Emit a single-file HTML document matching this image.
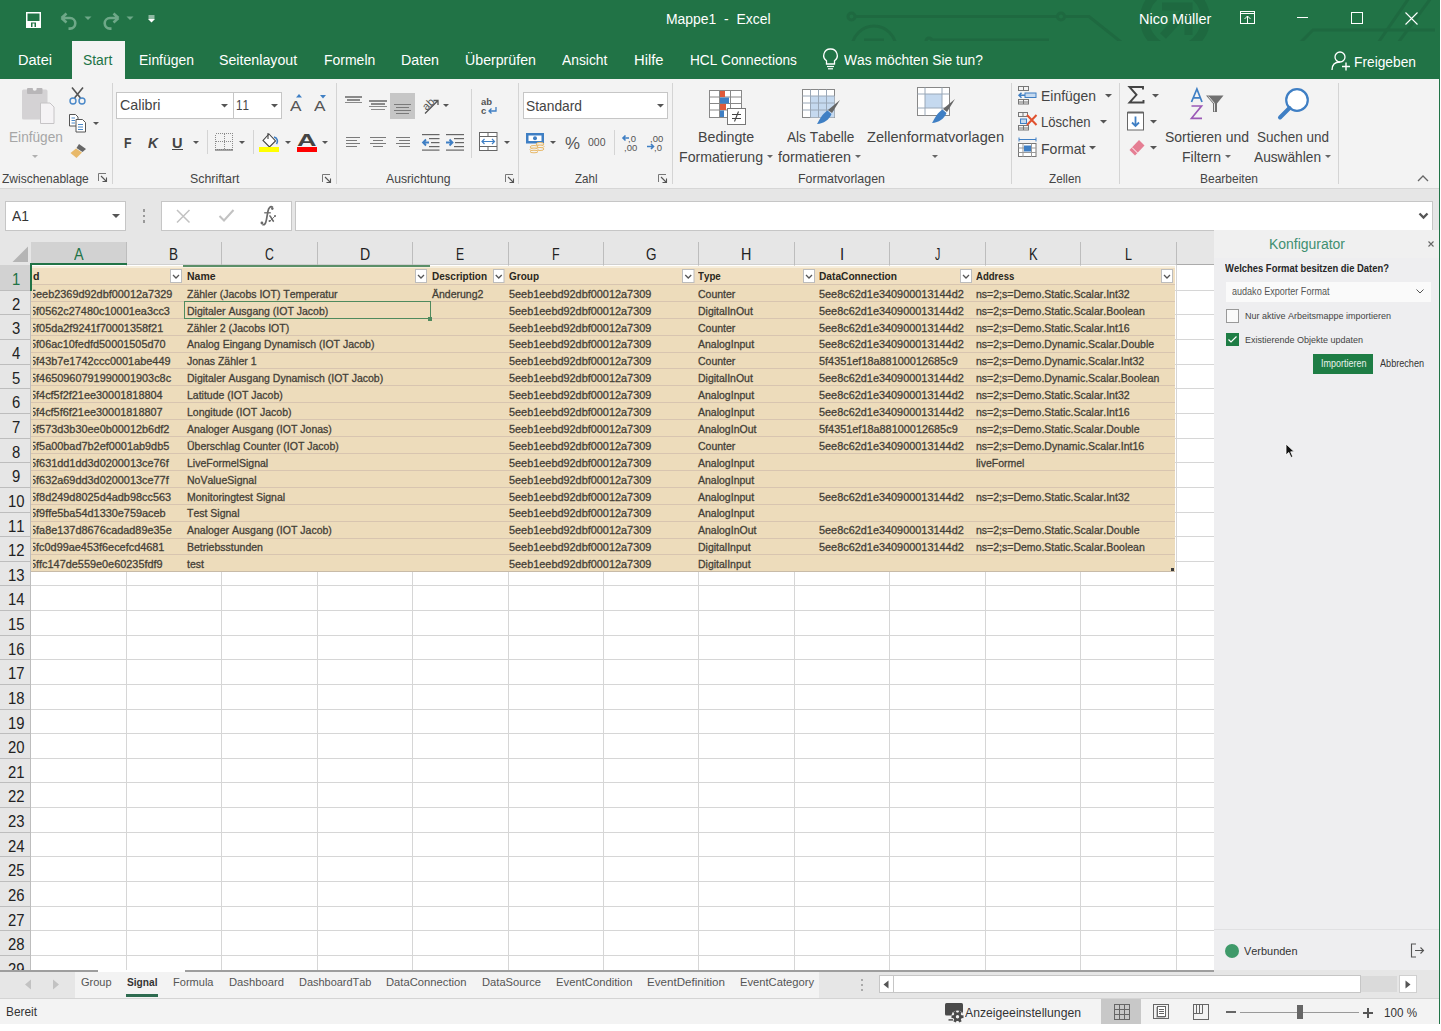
<!DOCTYPE html>
<html><head><meta charset="utf-8"><title>Excel</title>
<style>
html,body{margin:0;padding:0;background:#fff;}
#root{position:relative;width:1441px;height:1031px;overflow:hidden;font-family:"Liberation Sans",sans-serif;}
.t{position:absolute;white-space:pre;line-height:1;transform-origin:0 0;font-kerning:none;}
.r{position:absolute;}
svg.r{overflow:visible;}
</style></head><body><div id="root">
<div class="r" style="left:0px;top:0px;width:1441px;height:79px;background:#217346;"></div>
<svg class="r" style="left:0px;top:0px;overflow:hidden" width="1441" height="41" viewBox="0 0 1441 41"><g fill="none" stroke="#1e6940" stroke-width="3">
<circle cx="851.5" cy="16.5" r="3.5"/><line x1="855" y1="16.5" x2="1057.5" y2="16.5"/><circle cx="1061" cy="16.5" r="3.5"/>
<polyline points="1064.5,16.5 1089,16.5 1121,42"/>
<circle cx="874" cy="48" r="22"/><line x1="864" y1="40" x2="884" y2="40"/>
<circle cx="929" cy="41" r="3"/><line x1="932" y1="40" x2="1049" y2="40"/>
<circle cx="1175" cy="19" r="30.5" stroke-width="9"/>
<path d="M1163,36 L1188,9 M1162,6.5 H1188.5 V35" stroke-width="8"/>
<polyline points="1300,43 1313,30 1435,30"/>
<line x1="1378" y1="43" x2="1409" y2="-2"/><line x1="1398" y1="43" x2="1431" y2="-2"/>
</g></svg>
<svg class="r" style="left:26px;top:12px;" width="15" height="16" viewBox="0 0 15 16"><rect x="0.75" y="0.75" width="13.5" height="14.5" fill="none" stroke="#fff" stroke-width="1.5"/><rect x="1" y="9" width="13" height="6" fill="#fff"/><rect x="5" y="10.5" width="5" height="4.5" fill="#217346"/><rect x="6.5" y="11.5" width="2" height="3.5" fill="#fff"/></svg>
<svg class="r" style="left:59px;top:12px;" width="20" height="17" viewBox="0 0 20 17"><path d="M2.5,6 L7.5,1.5 M2.5,6 L7.5,10.5 M2.5,6 H11 A5.3,5.3 0 0 1 11,16.6 H9.5" fill="none" stroke="#6ea888" stroke-width="2.6"/></svg>
<svg class="r" style="left:84px;top:16px;" width="8" height="5" viewBox="0 0 8 5"><path d="M0.5,0.5 H7.5 L4,4 Z" fill="#6ea888"/></svg>
<svg class="r" style="left:101px;top:12px;" width="20" height="17" viewBox="0 0 20 17"><path d="M17.5,6 L12.5,1.5 M17.5,6 L12.5,10.5 M17.5,6 H9 A5.3,5.3 0 0 0 9,16.6 H10.5" fill="none" stroke="#6ea888" stroke-width="2.6"/></svg>
<svg class="r" style="left:126px;top:16px;" width="8" height="5" viewBox="0 0 8 5"><path d="M0.5,0.5 H7.5 L4,4 Z" fill="#6ea888"/></svg>
<svg class="r" style="left:148px;top:15px;" width="7" height="8" viewBox="0 0 7 8"><rect x="0.5" y="0.5" width="6" height="1" fill="#fff"/><rect x="0.5" y="2.5" width="6" height="1" fill="#fff"/><path d="M0,4 H7 L3.5,7.5 Z" fill="#fff"/></svg>
<div class="t" style="left:665.50px;top:11.48px;font-size:15.5px;color:#fff;transform:scaleX(0.8985);">Mappe1  -  Excel</div>
<div class="t" style="left:1138.60px;top:10.58px;font-size:15.5px;color:#fff;transform:scaleX(0.9340);">Nico Müller</div>
<svg class="r" style="left:1240px;top:11px;" width="16" height="14" viewBox="0 0 16 14"><rect x="0.5" y="0.5" width="14" height="12" fill="none" stroke="#fff" stroke-width="1"/><line x1="0.5" y1="2.5" x2="14.5" y2="2.5" stroke="#fff" stroke-width="1"/><path d="M7.5,12.5 V5 M4.5,8 L7.5,5 L10.5,8" fill="none" stroke="#fff" stroke-width="1"/></svg>
<div class="r" style="left:1297px;top:17px;width:11px;height:1px;background:#fff;"></div>
<div class="r" style="left:1351px;top:12px;width:12px;height:12px;background:transparent;border:1px solid #fff;box-sizing:border-box;"></div>
<svg class="r" style="left:1405px;top:12px;" width="13" height="13" viewBox="0 0 13 13"><path d="M0.5,0.5 L12.5,12.5 M12.5,0.5 L0.5,12.5" stroke="#fff" stroke-width="1.1"/></svg>
<div class="r" style="left:72px;top:41px;width:53px;height:38px;background:#f3f3f3;"></div>
<div class="t" style="left:17.50px;top:51.73px;font-size:15.2px;color:#fff;transform:scaleX(0.9582);">Datei</div>
<div class="t" style="left:138.50px;top:51.73px;font-size:15.2px;color:#fff;transform:scaleX(0.9166);">Einfügen</div>
<div class="t" style="left:219.30px;top:51.73px;font-size:15.2px;color:#fff;transform:scaleX(0.9347);">Seitenlayout</div>
<div class="t" style="left:323.50px;top:51.73px;font-size:15.2px;color:#fff;transform:scaleX(0.9203);">Formeln</div>
<div class="t" style="left:400.80px;top:51.73px;font-size:15.2px;color:#fff;transform:scaleX(0.9369);">Daten</div>
<div class="t" style="left:465.00px;top:51.73px;font-size:15.2px;color:#fff;transform:scaleX(0.9337);">Überprüfen</div>
<div class="t" style="left:562.30px;top:51.73px;font-size:15.2px;color:#fff;transform:scaleX(0.9108);">Ansicht</div>
<div class="t" style="left:634.20px;top:51.73px;font-size:15.2px;color:#fff;transform:scaleX(0.9734);">Hilfe</div>
<div class="t" style="left:690.00px;top:51.73px;font-size:15.2px;color:#fff;transform:scaleX(0.8982);">HCL Connections</div>
<div class="t" style="left:843.90px;top:51.73px;font-size:15.2px;color:#fff;transform:scaleX(0.9096);">Was möchten Sie tun?</div>
<div class="t" style="left:83.30px;top:51.73px;font-size:15.2px;color:#217346;transform:scaleX(0.9128);">Start</div>
<svg class="r" style="left:822px;top:48px;" width="17" height="22" viewBox="0 0 17 22"><path d="M8.5,1 A6.5,6.5 0 0 1 12.5,12.8 V16 H4.5 V12.8 A6.5,6.5 0 0 1 8.5,1 Z" fill="none" stroke="#fff" stroke-width="1.3"/><line x1="5" y1="18.5" x2="12" y2="18.5" stroke="#fff" stroke-width="1.2"/><line x1="6" y1="20.8" x2="11" y2="20.8" stroke="#fff" stroke-width="1.2"/></svg>
<svg class="r" style="left:1331px;top:51px;" width="20" height="20" viewBox="0 0 20 20"><circle cx="9" cy="6" r="5" fill="none" stroke="#fff" stroke-width="1.3"/><path d="M1,19 C1,13 4,11 9,11" fill="none" stroke="#fff" stroke-width="1.3"/><path d="M11,15.5 H19 M15,11.5 V19.5" stroke="#fff" stroke-width="1.4"/></svg>
<div class="t" style="left:1354.00px;top:53.83px;font-size:15.2px;color:#fff;transform:scaleX(0.9058);">Freigeben</div>
<div class="r" style="left:0px;top:79px;width:1439px;height:109px;background:#f3f3f3;"></div>
<div class="r" style="left:0px;top:188px;width:1439px;height:1px;background:#d6d6d6;"></div>
<div class="r" style="left:1439px;top:79px;width:1px;height:945px;background:#217346;"></div>
<div class="r" style="left:0px;top:189px;width:1439px;height:53px;background:#e6e6e6;"></div>
<div class="r" style="left:112px;top:83px;width:1px;height:101px;background:#d4d4d4;"></div>
<div class="r" style="left:336px;top:83px;width:1px;height:101px;background:#d4d4d4;"></div>
<div class="r" style="left:518px;top:83px;width:1px;height:101px;background:#d4d4d4;"></div>
<div class="r" style="left:672px;top:83px;width:1px;height:101px;background:#d4d4d4;"></div>
<div class="r" style="left:1011px;top:83px;width:1px;height:101px;background:#d4d4d4;"></div>
<div class="r" style="left:1119px;top:83px;width:1px;height:101px;background:#d4d4d4;"></div>
<div class="r" style="left:1338px;top:83px;width:1px;height:101px;background:#d4d4d4;"></div>
<div class="t" style="left:2.20px;top:172.96px;font-size:12.8px;color:#444444;transform:scaleX(0.9384);">Zwischenablage</div>
<div class="t" style="left:189.80px;top:172.96px;font-size:12.8px;color:#444444;transform:scaleX(0.9666);">Schriftart</div>
<div class="t" style="left:385.50px;top:172.96px;font-size:12.8px;color:#444444;transform:scaleX(0.9542);">Ausrichtung</div>
<div class="t" style="left:574.50px;top:172.96px;font-size:12.8px;color:#444444;transform:scaleX(0.9036);">Zahl</div>
<div class="t" style="left:798.00px;top:172.96px;font-size:12.8px;color:#444444;transform:scaleX(0.9706);">Formatvorlagen</div>
<div class="t" style="left:1049.00px;top:172.96px;font-size:12.8px;color:#444444;transform:scaleX(0.9179);">Zellen</div>
<div class="t" style="left:1200.00px;top:172.96px;font-size:12.8px;color:#444444;transform:scaleX(0.9368);">Bearbeiten</div>
<svg class="r" style="left:98px;top:173px;" width="10" height="10" viewBox="0 0 10 10"><path d="M0.5,8 V0.5 H8" fill="none" stroke="#777" stroke-width="1"/><path d="M3,3 L8.5,8.5 M8.5,4.5 V8.5 H4.5" fill="none" stroke="#555" stroke-width="1.1"/></svg>
<svg class="r" style="left:322px;top:174px;" width="10" height="10" viewBox="0 0 10 10"><path d="M0.5,8 V0.5 H8" fill="none" stroke="#777" stroke-width="1"/><path d="M3,3 L8.5,8.5 M8.5,4.5 V8.5 H4.5" fill="none" stroke="#555" stroke-width="1.1"/></svg>
<svg class="r" style="left:505px;top:174px;" width="10" height="10" viewBox="0 0 10 10"><path d="M0.5,8 V0.5 H8" fill="none" stroke="#777" stroke-width="1"/><path d="M3,3 L8.5,8.5 M8.5,4.5 V8.5 H4.5" fill="none" stroke="#555" stroke-width="1.1"/></svg>
<svg class="r" style="left:658px;top:174px;" width="10" height="10" viewBox="0 0 10 10"><path d="M0.5,8 V0.5 H8" fill="none" stroke="#777" stroke-width="1"/><path d="M3,3 L8.5,8.5 M8.5,4.5 V8.5 H4.5" fill="none" stroke="#555" stroke-width="1.1"/></svg>
<svg class="r" style="left:20px;top:86px;" width="36" height="40" viewBox="0 0 36 40"><rect x="2" y="3.5" width="25.5" height="30" rx="1.5" fill="#d4d2d4"/><rect x="7" y="2" width="15.5" height="6" rx="1" fill="#b8b6b8"/><circle cx="14.7" cy="2.8" r="2" fill="#f3f3f3"/><path d="M20.5,17 H30 L34,21 V37.5 H20.5 Z" fill="#f5f3f5" stroke="#c6c4c6" stroke-width="1"/></svg>
<div class="t" style="left:8.50px;top:128.80px;font-size:15px;color:#a6a6a6;transform:scaleX(0.9102);">Einfügen</div>
<svg class="r" style="left:32px;top:154.5px;" width="6" height="3" viewBox="0 0 6 3"><path d="M0,0 H6 L3,3 Z" fill="#b0b0b0"/></svg>
<svg class="r" style="left:69px;top:87px;" width="17" height="18" viewBox="0 0 17 18"><path d="M3,0.5 L11.5,11 M14,0.5 L5.5,11" stroke="#555" stroke-width="1.6"/><circle cx="4" cy="14" r="3" fill="none" stroke="#4a88c8" stroke-width="1.4"/><circle cx="13" cy="14" r="3" fill="none" stroke="#4a88c8" stroke-width="1.4"/></svg>
<svg class="r" style="left:69px;top:114px;" width="18" height="19" viewBox="0 0 18 19"><path d="M0.5,0.5 H6.5 L9,3 V12 H0.5 Z" fill="#fff" stroke="#555" stroke-width="1"/><path d="M7,5.5 H13.5 L16.5,8.5 V18 H7 Z" fill="#fff" stroke="#555" stroke-width="1"/><path d="M2.5,4 H6 M2.5,6.5 H6 M2.5,9 H6 M9,10.5 H14 M9,13 H14 M9,15.5 H14" stroke="#4a88c8" stroke-width="1"/></svg>
<svg class="r" style="left:93px;top:121.5px;" width="6" height="3" viewBox="0 0 6 3"><path d="M0,0 H6 L3,3 Z" fill="#555"/></svg>
<svg class="r" style="left:70px;top:143px;" width="17" height="15" viewBox="0 0 17 15"><path d="M9,1 L16,6 L12.5,9 L6.5,5 Z" fill="#666"/><path d="M6,5.5 L12,9.5 L6.5,15 L0.5,10 Z" fill="#e8b96a"/></svg>
<div class="r" style="left:116px;top:92px;width:118px;height:27px;background:#fff;border:1px solid #c6c6c6;box-sizing:border-box;"></div>
<div class="r" style="left:233px;top:92px;width:49px;height:27px;background:#fff;border:1px solid #c6c6c6;box-sizing:border-box;"></div>
<div class="t" style="left:119.50px;top:98.32px;font-size:14.5px;color:#444444;transform:scaleX(0.9856);">Calibri</div>
<div class="t" style="left:236.00px;top:98.32px;font-size:14.5px;color:#444444;transform:scaleX(0.8060);">11</div>
<svg class="r" style="left:221.0px;top:103.75px;" width="7.0" height="3.5" viewBox="0 0 7.0 3.5"><path d="M0,0 H7.0 L3.5,3.5 Z" fill="#555"/></svg>
<svg class="r" style="left:271.0px;top:103.75px;" width="7.0" height="3.5" viewBox="0 0 7.0 3.5"><path d="M0,0 H7.0 L3.5,3.5 Z" fill="#555"/></svg>
<div class="t" style="left:290.40px;top:98.30px;font-size:15px;color:#555;transform:scaleX(1.1494);">A</div>
<svg class="r" style="left:296px;top:94px;" width="7" height="4" viewBox="0 0 7 4"><path d="M0,3.5 H6 L3,0 Z" fill="#3f7fc4"/></svg>
<div class="t" style="left:313.50px;top:98.30px;font-size:15px;color:#555;transform:scaleX(1.1494);">A</div>
<svg class="r" style="left:320px;top:95px;" width="7" height="4" viewBox="0 0 7 4"><path d="M0,0 H6 L3,3.5 Z" fill="#3f7fc4"/></svg>
<div class="t" style="left:124.40px;top:134.68px;font-size:15.5px;color:#444;font-weight:bold;transform:scaleX(0.7921);">F</div>
<div class="t" style="left:148.00px;top:134.68px;font-size:15.5px;color:#444;font-weight:bold;transform:scaleX(0.8934);font-style:italic;">K</div>
<div class="t" style="left:172.00px;top:134.68px;font-size:15.5px;color:#444;font-weight:bold;transform:scaleX(0.9380);">U</div>
<div class="r" style="left:172px;top:148.6px;width:11px;height:1.4px;background:#444;"></div>
<svg class="r" style="left:193px;top:140.5px;" width="6" height="3" viewBox="0 0 6 3"><path d="M0,0 H6 L3,3 Z" fill="#555"/></svg>
<div class="r" style="left:207px;top:130px;width:1px;height:24px;background:#d4d4d4;"></div>
<svg class="r" style="left:215px;top:133px;" width="18" height="18" viewBox="0 0 18 18"><g stroke="#8a8a8a" stroke-width="1" stroke-dasharray="1,1" fill="none" shape-rendering="crispEdges"><rect x="0.5" y="0.5" width="17" height="16"/><line x1="9.5" y1="0.5" x2="9.5" y2="16.5"/><line x1="0.5" y1="8.5" x2="17.5" y2="8.5"/></g><line x1="0" y1="17" x2="18" y2="17" stroke="#777" stroke-width="1.3"/></svg>
<svg class="r" style="left:239px;top:140.5px;" width="6" height="3" viewBox="0 0 6 3"><path d="M0,0 H6 L3,3 Z" fill="#555"/></svg>
<div class="r" style="left:253px;top:130px;width:1px;height:24px;background:#d4d4d4;"></div>
<svg class="r" style="left:259px;top:132px;" width="22" height="21" viewBox="0 0 22 21"><path d="M10,2 L16.5,9 L10.5,15 L4,8.5 Z" fill="#fff" stroke="#444" stroke-width="1.1"/><path d="M9,1 V7" stroke="#444" stroke-width="1.1"/><path d="M15,5 C19,6 19,10 17.5,12" fill="none" stroke="#3f7fc4" stroke-width="1.6"/><rect x="0" y="15" width="20" height="5" fill="#ffff00"/></svg>
<svg class="r" style="left:285px;top:140.5px;" width="6" height="3" viewBox="0 0 6 3"><path d="M0,0 H6 L3,3 Z" fill="#555"/></svg>
<div class="t" style="left:297.00px;top:132.03px;font-size:16.5px;color:#444;font-weight:bold;transform:scaleX(1.6365);">A</div>
<div class="r" style="left:297px;top:147px;width:20px;height:5px;background:#ff0000;"></div>
<svg class="r" style="left:322px;top:140.5px;" width="6" height="3" viewBox="0 0 6 3"><path d="M0,0 H6 L3,3 Z" fill="#555"/></svg>
<div class="r" style="left:344.5px;top:96.3px;width:17.5px;height:1.4px;background:#8a8a8a;"></div>
<div class="r" style="left:346.5px;top:99.2px;width:13.5px;height:1.4px;background:#8a8a8a;"></div>
<div class="r" style="left:344.5px;top:102.1px;width:17.5px;height:1.4px;background:#8a8a8a;"></div>
<div class="r" style="left:369px;top:100.3px;width:17.5px;height:1.4px;background:#8a8a8a;"></div>
<div class="r" style="left:371px;top:103.2px;width:13.5px;height:1.4px;background:#8a8a8a;"></div>
<div class="r" style="left:369px;top:106.1px;width:17.5px;height:1.4px;background:#8a8a8a;"></div>
<div class="r" style="left:371px;top:109px;width:13.5px;height:1.4px;background:#8a8a8a;"></div>
<div class="r" style="left:390px;top:93px;width:25px;height:26px;background:#c6c6c6;"></div>
<div class="r" style="left:394px;top:104.1px;width:17px;height:1.4px;background:#7a7a7a;"></div>
<div class="r" style="left:396px;top:107px;width:13px;height:1.4px;background:#7a7a7a;"></div>
<div class="r" style="left:394px;top:110px;width:17px;height:1.4px;background:#7a7a7a;"></div>
<div class="r" style="left:396px;top:112.9px;width:13px;height:1.4px;background:#7a7a7a;"></div>
<svg class="r" style="left:421px;top:96px;" width="20" height="19" viewBox="0 0 20 19"><text x="1" y="12" font-family="Liberation Sans" font-size="11" fill="#555" transform="rotate(-45 7 8)">ab</text><path d="M4,17.5 L17,4.5 M12.5,4.5 H17 V9" fill="none" stroke="#555" stroke-width="1.3"/></svg>
<svg class="r" style="left:443px;top:103.5px;" width="6" height="3" viewBox="0 0 6 3"><path d="M0,0 H6 L3,3 Z" fill="#555"/></svg>
<div class="r" style="left:471px;top:89px;width:1px;height:69px;background:#d4d4d4;"></div>
<svg class="r" style="left:480px;top:97px;" width="18" height="18" viewBox="0 0 18 18"><text x="1" y="8" font-family="Liberation Sans" font-weight="bold" font-size="9.5" fill="#555">ab</text><text x="1" y="16.5" font-family="Liberation Sans" font-weight="bold" font-size="9.5" fill="#555">c</text><path d="M16,10 V14 H9 M11.5,11.5 L9,14 L11.5,16.5" fill="none" stroke="#3f7fc4" stroke-width="1.3"/></svg>
<div class="r" style="left:346px;top:137px;width:14px;height:1.2px;background:#7a7a7a;"></div>
<div class="r" style="left:370px;top:137px;width:15.5px;height:1.2px;background:#7a7a7a;"></div>
<div class="r" style="left:396px;top:137px;width:13.5px;height:1.2px;background:#7a7a7a;"></div>
<div class="r" style="left:346px;top:140px;width:11px;height:1.2px;background:#7a7a7a;"></div>
<div class="r" style="left:373px;top:140px;width:9.5px;height:1.2px;background:#7a7a7a;"></div>
<div class="r" style="left:399px;top:140px;width:10.5px;height:1.2px;background:#7a7a7a;"></div>
<div class="r" style="left:346px;top:143px;width:14px;height:1.2px;background:#7a7a7a;"></div>
<div class="r" style="left:370px;top:143px;width:15.5px;height:1.2px;background:#7a7a7a;"></div>
<div class="r" style="left:396px;top:143px;width:13.5px;height:1.2px;background:#7a7a7a;"></div>
<div class="r" style="left:346px;top:146px;width:11px;height:1.2px;background:#7a7a7a;"></div>
<div class="r" style="left:373px;top:146px;width:9.5px;height:1.2px;background:#7a7a7a;"></div>
<div class="r" style="left:399px;top:146px;width:10.5px;height:1.2px;background:#7a7a7a;"></div>
<svg class="r" style="left:422px;top:134px;" width="18" height="17" viewBox="0 0 18 17"><rect x="0" y="0" width="17.5" height="1.2" fill="#666"/><rect x="7" y="4" width="10.5" height="1.2" fill="#666"/><rect x="9" y="8" width="8.5" height="1.2" fill="#666"/><rect x="7" y="12" width="10.5" height="1.2" fill="#666"/><rect x="0" y="15.5" width="17.5" height="1.2" fill="#666"/><path d="M1,8.5 H7 M4,5.5 L1,8.5 L4,11.5" fill="none" stroke="#3f7fc4" stroke-width="1.8"/></svg>
<svg class="r" style="left:446px;top:134px;" width="19" height="17" viewBox="0 0 19 17"><rect x="0" y="0" width="18" height="1.2" fill="#666"/><rect x="8" y="4" width="10" height="1.2" fill="#666"/><rect x="9" y="8" width="9" height="1.2" fill="#666"/><rect x="8" y="12" width="10" height="1.2" fill="#666"/><rect x="0" y="15.5" width="18" height="1.2" fill="#666"/><path d="M0,8.5 H6.5 M3.5,5.5 L6.5,8.5 L3.5,11.5" fill="none" stroke="#3f7fc4" stroke-width="1.8"/></svg>
<svg class="r" style="left:479px;top:132px;" width="19" height="20" viewBox="0 0 19 20"><rect x="0.5" y="0.5" width="17.5" height="18" fill="#fff" stroke="#666" stroke-width="1"/><path d="M0.5,4.5 H18 M0.5,14.5 H18 M9,0.5 V4.5 M9,14.5 V18.5" stroke="#666" stroke-width="1"/><path d="M3,9.5 H15.5 M5.5,7 L3,9.5 L5.5,12 M13,7 L15.5,9.5 L13,12" fill="none" stroke="#3f7fc4" stroke-width="1.2"/></svg>
<svg class="r" style="left:503.5px;top:140.5px;" width="6" height="3" viewBox="0 0 6 3"><path d="M0,0 H6 L3,3 Z" fill="#555"/></svg>
<div class="r" style="left:523px;top:92px;width:145px;height:27px;background:#fff;border:1px solid #c6c6c6;box-sizing:border-box;"></div>
<div class="t" style="left:526.00px;top:98.72px;font-size:14.5px;color:#444444;transform:scaleX(0.9516);">Standard</div>
<svg class="r" style="left:656.5px;top:103.75px;" width="7.0" height="3.5" viewBox="0 0 7.0 3.5"><path d="M0,0 H7.0 L3.5,3.5 Z" fill="#555"/></svg>
<svg class="r" style="left:526px;top:133px;" width="19" height="20" viewBox="0 0 19 20"><rect x="0" y="0" width="18" height="10.5" fill="#3f7fc4"/><rect x="2.5" y="2.5" width="13" height="5.5" fill="#fff"/><circle cx="9" cy="5.2" r="2" fill="#3f7fc4"/><g fill="#f3f3f3" stroke="#e8b96a" stroke-width="1"><ellipse cx="14" cy="11" rx="4" ry="1.5"/><ellipse cx="14" cy="13.5" rx="4" ry="1.5"/><ellipse cx="14" cy="16" rx="4" ry="1.5"/><ellipse cx="8" cy="14" rx="4" ry="1.5"/><ellipse cx="8" cy="16.5" rx="4" ry="1.5"/><ellipse cx="8" cy="18.5" rx="4" ry="1.3"/></g></svg>
<svg class="r" style="left:550px;top:140.5px;" width="6" height="3" viewBox="0 0 6 3"><path d="M0,0 H6 L3,3 Z" fill="#555"/></svg>
<div class="t" style="left:565.00px;top:135.11px;font-size:17px;color:#555;transform:scaleX(0.9923);">%</div>
<div class="t" style="left:588.00px;top:137.19px;font-size:11px;color:#555;transform:scaleX(0.9535);">000</div>
<div class="r" style="left:614px;top:130px;width:1px;height:25px;background:#d4d4d4;"></div>
<svg class="r" style="left:622px;top:133px;" width="18" height="19" viewBox="0 0 18 19"><text x="6" y="8.5" font-family="Liberation Sans" font-size="9.5" fill="#555">,0</text><text x="2" y="17.5" font-family="Liberation Sans" font-size="9.5" fill="#555">,00</text><path d="M1,5 H7 M3.5,2.5 L1,5 L3.5,7.5" fill="none" stroke="#3f7fc4" stroke-width="1.6"/></svg>
<svg class="r" style="left:646px;top:133px;" width="19" height="19" viewBox="0 0 19 19"><text x="4" y="8.5" font-family="Liberation Sans" font-size="9.5" fill="#555">,00</text><text x="8" y="17.5" font-family="Liberation Sans" font-size="9.5" fill="#555">,0</text><path d="M1,13.5 H7.5 M5,11 L7.5,13.5 L5,16" fill="none" stroke="#3f7fc4" stroke-width="1.6"/></svg>
<svg class="r" style="left:709px;top:90px;" width="38" height="35" viewBox="0 0 38 35"><g fill="#fff" stroke="#888" stroke-width="1"><rect x="0.5" y="0.5" width="32" height="27"/></g><path d="M0.5,7 H32.5 M0.5,13.5 H32.5 M0.5,20 H32.5 M10.5,0.5 V27.5 M21.5,0.5 V27.5" stroke="#888" stroke-width="1"/><rect x="11" y="1" width="5" height="6" fill="#e05a3a"/><rect x="11" y="7.5" width="9" height="6" fill="#3f7fc4"/><rect x="11" y="14" width="6" height="6" fill="#e05a3a"/><rect x="11" y="20.5" width="4" height="6.5" fill="#3f7fc4"/><rect x="18.5" y="18.5" width="18" height="16" fill="#fff" stroke="#777" stroke-width="1"/><path d="M23,24.5 H32 M23,28.5 H32 M29.5,21.5 L25.5,31.5" stroke="#444" stroke-width="1.1"/></svg>
<div class="t" style="left:698.20px;top:129.00px;font-size:15px;color:#444444;transform:scaleX(0.9491);">Bedingte</div>
<div class="t" style="left:678.80px;top:148.80px;font-size:15px;color:#444444;transform:scaleX(0.9417);">Formatierung</div>
<svg class="r" style="left:767px;top:155.0px;" width="6" height="3" viewBox="0 0 6 3"><path d="M0,0 H6 L3,3 Z" fill="#666"/></svg>
<svg class="r" style="left:802px;top:89px;" width="40" height="36" viewBox="0 0 40 36"><rect x="0.5" y="0.5" width="32" height="28" fill="#fff" stroke="#888"/><rect x="8.5" y="7" width="24" height="21.5" fill="#c5d9ef"/><path d="M0.5,7 H32.5 M0.5,14 H32.5 M0.5,21 H32.5 M8.5,0.5 V28.5 M16.5,0.5 V28.5 M24.5,0.5 V28.5" stroke="#9aa8b8" stroke-width="1"/><path d="M38,11 L30,24 L26,21 Z" fill="#666"/><path d="M25.5,21.5 L29.5,25 C27,31 22,34.5 15,35 C18,30 20,25 25.5,21.5 Z" fill="#3f7fc4"/></svg>
<div class="t" style="left:786.60px;top:129.00px;font-size:15px;color:#444444;transform:scaleX(0.9083);">Als Tabelle</div>
<div class="t" style="left:778.00px;top:148.80px;font-size:15px;color:#444444;transform:scaleX(0.9622);">formatieren</div>
<svg class="r" style="left:855px;top:155.0px;" width="6" height="3" viewBox="0 0 6 3"><path d="M0,0 H6 L3,3 Z" fill="#666"/></svg>
<svg class="r" style="left:917px;top:87px;" width="40" height="38" viewBox="0 0 40 38"><rect x="0.5" y="0.5" width="32" height="28" fill="#fff" stroke="#888"/><rect x="8" y="7" width="17" height="14" fill="#c5d9ef"/><path d="M0.5,7 H32.5 M0.5,21 H32.5 M8,0.5 V28.5 M25,0.5 V28.5" stroke="#9aa8b8" stroke-width="1"/><path d="M38,12 L30,25 L26,22 Z" fill="#666"/><path d="M25.5,22.5 L29.5,26 C27,32 22,35.5 15,36 C18,31 20,26 25.5,22.5 Z" fill="#3f7fc4"/></svg>
<div class="t" style="left:866.50px;top:129.00px;font-size:15px;color:#444444;transform:scaleX(0.9723);">Zellenformatvorlagen</div>
<svg class="r" style="left:932px;top:155.0px;" width="6" height="3" viewBox="0 0 6 3"><path d="M0,0 H6 L3,3 Z" fill="#666"/></svg>
<svg class="r" style="left:1018px;top:86px;" width="19" height="19" viewBox="0 0 19 19"><g fill="none" stroke="#777" stroke-width="1"><rect x="0.5" y="0.5" width="10" height="4"/><rect x="0.5" y="13.5" width="10" height="4.5"/><path d="M0.5,16 H10.5 M5.5,13.5 V18"/><path d="M5.5,0.5 V4.5"/></g><rect x="7" y="7" width="11" height="4.5" fill="#c5d9ef" stroke="#3f7fc4" stroke-width="1"/><path d="M1,9.2 H7 M3.5,6.7 L1,9.2 L3.5,11.7" fill="none" stroke="#3f7fc4" stroke-width="1.5"/></svg>
<div class="t" style="left:1040.50px;top:87.90px;font-size:15px;color:#444444;transform:scaleX(0.9288);">Einfügen</div>
<svg class="r" style="left:1104.5px;top:93.75px;" width="7.0" height="3.5" viewBox="0 0 7.0 3.5"><path d="M0,0 H7.0 L3.5,3.5 Z" fill="#555"/></svg>
<svg class="r" style="left:1018px;top:112px;" width="20" height="19" viewBox="0 0 20 19"><g fill="none" stroke="#777" stroke-width="1"><rect x="0.5" y="0.5" width="9" height="4"/><rect x="0.5" y="13.5" width="10" height="4.5"/><path d="M0.5,16 H10.5 M5.5,13.5 V18 M5,0.5 V4.5"/></g><rect x="2.5" y="7" width="6" height="4.5" fill="#c5d9ef" stroke="#3f7fc4"/><path d="M9,3 L18.5,13 M18.5,3 L9,13" stroke="#e0512e" stroke-width="2"/></svg>
<div class="t" style="left:1040.50px;top:114.30px;font-size:15px;color:#444444;transform:scaleX(0.8728);">Löschen</div>
<svg class="r" style="left:1099.5px;top:119.75px;" width="7.0" height="3.5" viewBox="0 0 7.0 3.5"><path d="M0,0 H7.0 L3.5,3.5 Z" fill="#555"/></svg>
<svg class="r" style="left:1018px;top:137px;" width="20" height="22" viewBox="0 0 20 22"><path d="M1,2.5 H18 M1,0.5 V4.5 M18,0.5 V4.5" stroke="#3f7fc4" stroke-width="1"/><rect x="0.5" y="6.5" width="17.5" height="13" fill="#fff" stroke="#777"/><path d="M0.5,11 H18 M0.5,15.5 H18 M5,6.5 V20 M13.5,6.5 V20" stroke="#999" stroke-width="1"/><rect x="6" y="8.5" width="7" height="6" fill="#3f7fc4"/></svg>
<div class="t" style="left:1040.50px;top:140.90px;font-size:15px;color:#444444;transform:scaleX(0.9367);">Format</div>
<svg class="r" style="left:1088.5px;top:146.25px;" width="7.0" height="3.5" viewBox="0 0 7.0 3.5"><path d="M0,0 H7.0 L3.5,3.5 Z" fill="#555"/></svg>
<svg class="r" style="left:1128px;top:86px;" width="17" height="18" viewBox="0 0 17 18"><path d="M15,3.5 V1 H1.5 L8.5,8.8 L1.5,16.5 H15.5 V14" fill="none" stroke="#444" stroke-width="1.9" stroke-linejoin="miter"/></svg>
<svg class="r" style="left:1151.5px;top:93.75px;" width="7.0" height="3.5" viewBox="0 0 7.0 3.5"><path d="M0,0 H7.0 L3.5,3.5 Z" fill="#555"/></svg>
<svg class="r" style="left:1127px;top:111px;" width="18" height="20" viewBox="0 0 18 20"><rect x="0.5" y="1.5" width="16" height="17.5" fill="#fff" stroke="#666"/><rect x="0.5" y="0.5" width="16" height="2" fill="#666"/><path d="M8.5,5.5 V15 M5,11.5 L8.5,15 L12,11.5" fill="none" stroke="#3f7fc4" stroke-width="1.8"/></svg>
<svg class="r" style="left:1149.5px;top:119.75px;" width="7.0" height="3.5" viewBox="0 0 7.0 3.5"><path d="M0,0 H7.0 L3.5,3.5 Z" fill="#555"/></svg>
<svg class="r" style="left:1128px;top:139px;" width="18" height="18" viewBox="0 0 18 18"><path d="M11,1 L16.5,6.5 L7,16.5 L1.5,11 Z" fill="#e57e93"/><path d="M4,8.5 L9.5,14" stroke="#fff" stroke-width="1"/></svg>
<svg class="r" style="left:1149.5px;top:146.25px;" width="7.0" height="3.5" viewBox="0 0 7.0 3.5"><path d="M0,0 H7.0 L3.5,3.5 Z" fill="#555"/></svg>
<svg class="r" style="left:1189px;top:88px;" width="36" height="33" viewBox="0 0 36 33"><path d="M2.5,14 L7.9,1 L13,14 M4.3,9.8 H11.5" fill="none" stroke="#3f7fc4" stroke-width="1.7"/><path d="M2.5,18 H12.5 L2.5,30.3 H13" fill="none" stroke="#9b59b6" stroke-width="1.7"/><path d="M17,7.5 H34.5 L28,15.5 V24 H24 V15.5 Z" fill="#707070"/><path d="M19.5,8.5 L25.5,15.5 V23.5" fill="none" stroke="#f3f3f3" stroke-width="0.9"/></svg>
<div class="t" style="left:1164.50px;top:129.00px;font-size:15px;color:#444444;transform:scaleX(0.9327);">Sortieren und</div>
<div class="t" style="left:1182.00px;top:148.80px;font-size:15px;color:#444444;transform:scaleX(0.9358);">Filtern</div>
<svg class="r" style="left:1225px;top:155.0px;" width="6" height="3" viewBox="0 0 6 3"><path d="M0,0 H6 L3,3 Z" fill="#666"/></svg>
<svg class="r" style="left:1276px;top:87px;" width="35" height="35" viewBox="0 0 35 35"><circle cx="21" cy="13" r="10.8" fill="#fff" stroke="#3f7fc4" stroke-width="2.2"/><path d="M13.5,21 L4,30.5" stroke="#3f7fc4" stroke-width="4" stroke-linecap="round"/></svg>
<div class="t" style="left:1257.00px;top:129.00px;font-size:15px;color:#444444;transform:scaleX(0.8992);">Suchen und</div>
<div class="t" style="left:1254.40px;top:148.80px;font-size:15px;color:#444444;transform:scaleX(0.9130);">Auswählen</div>
<svg class="r" style="left:1325px;top:155.0px;" width="6" height="3" viewBox="0 0 6 3"><path d="M0,0 H6 L3,3 Z" fill="#666"/></svg>
<svg class="r" style="left:1417px;top:174px;" width="12" height="8" viewBox="0 0 12 8"><path d="M1,7 L6,2 L11,7" fill="none" stroke="#666" stroke-width="1.3"/></svg>
<div class="r" style="left:5px;top:201px;width:121px;height:30px;background:#fff;border:1px solid #c6c6c6;box-sizing:border-box;"></div>
<div class="t" style="left:12.00px;top:209.01px;font-size:14.4px;color:#333;transform:scaleX(0.9652);">A1</div>
<svg class="r" style="left:112px;top:213.5px;" width="8" height="4" viewBox="0 0 8 4"><path d="M0,0 H8 L4,4 Z" fill="#555"/></svg>
<div class="r" style="left:142.5px;top:209px;width:2.5px;height:2.5px;background:#999;"></div>
<div class="r" style="left:142.5px;top:214.5px;width:2.5px;height:2.5px;background:#999;"></div>
<div class="r" style="left:142.5px;top:220px;width:2.5px;height:2.5px;background:#999;"></div>
<div class="r" style="left:161px;top:201px;width:131px;height:30px;background:#fff;border:1px solid #c6c6c6;box-sizing:border-box;"></div>
<svg class="r" style="left:176px;top:209px;" width="15" height="15" viewBox="0 0 15 15"><path d="M1,1 L13.5,13.5 M13.5,1 L1,13.5" stroke="#c2c2c2" stroke-width="1.5"/></svg>
<svg class="r" style="left:218px;top:208px;" width="17" height="15" viewBox="0 0 17 15"><path d="M1.5,8 L6,12.5 L15.5,2" fill="none" stroke="#c2c2c2" stroke-width="2"/></svg>
<svg class="r" style="left:250px;top:202px;" width="40" height="28" viewBox="0 0 40 28"><g fill="none" stroke="#6a6a6a"><path d="M22.8,5.4 C20.5,3.6 18.6,5.5 17.9,9.5 L16.4,17.8 C15.7,21.6 14.6,23.2 12.4,22.6" stroke-width="1.7"/><path d="M14.2,10.8 H20.8" stroke-width="1.3"/><path d="M19.4,13.4 C21.2,14.2 22,18.2 23.8,19.7" stroke-width="1.6"/><path d="M25.3,13.8 L19.6,19.4" stroke-width="0.9"/></g><g fill="#6a6a6a"><circle cx="22.3" cy="6.6" r="1.3"/><circle cx="11.9" cy="21" r="1.4"/><circle cx="25" cy="13.9" r="1"/><circle cx="19.6" cy="19" r="1.1"/></g></svg>
<div class="r" style="left:295px;top:201px;width:1138px;height:30px;background:#fff;border:1px solid #c6c6c6;box-sizing:border-box;"></div>
<svg class="r" style="left:1418px;top:212px;" width="11" height="7" viewBox="0 0 11 7"><path d="M1.5,1.5 L5.5,5.5 L9.5,1.5" fill="none" stroke="#555" stroke-width="2.3"/></svg>
<div class="r" style="left:31px;top:265px;width:1183px;height:706px;background:#fff;"></div>
<div class="r" style="left:0px;top:242px;width:1214px;height:23px;background:#e6e6e6;"></div>
<div class="r" style="left:0px;top:265px;width:30px;height:706px;background:#e6e6e6;"></div>
<div class="r" style="left:31px;top:242px;width:95px;height:22px;background:#d2d2d2;"></div>
<div class="r" style="left:31px;top:263px;width:95px;height:2px;background:#217346;"></div>
<div class="r" style="left:127px;top:264px;width:1087px;height:1px;background:#d0d0d0;"></div>
<div class="r" style="left:1176px;top:264px;width:38px;height:1.3px;background:#ababab;"></div>
<div class="r" style="left:126px;top:242px;width:1px;height:23px;background:#bdbdbd;"></div>
<div class="t" style="left:74.19px;top:246.40px;font-size:16.3px;color:#217346;transform:scaleX(0.8854);">A</div>
<div class="r" style="left:221px;top:242px;width:1px;height:23px;background:#bdbdbd;"></div>
<div class="t" style="left:169.48px;top:246.40px;font-size:16.3px;color:#222;transform:scaleX(0.8319);">B</div>
<div class="r" style="left:317px;top:242px;width:1px;height:23px;background:#bdbdbd;"></div>
<div class="t" style="left:265.07px;top:246.40px;font-size:16.3px;color:#222;transform:scaleX(0.7528);">C</div>
<div class="r" style="left:412px;top:242px;width:1px;height:23px;background:#bdbdbd;"></div>
<div class="t" style="left:359.89px;top:246.40px;font-size:16.3px;color:#222;transform:scaleX(0.8686);">D</div>
<div class="r" style="left:508px;top:242px;width:1px;height:23px;background:#bdbdbd;"></div>
<div class="t" style="left:456.44px;top:246.40px;font-size:16.3px;color:#222;transform:scaleX(0.7463);">E</div>
<div class="r" style="left:603px;top:242px;width:1px;height:23px;background:#bdbdbd;"></div>
<div class="t" style="left:552.18px;top:246.40px;font-size:16.3px;color:#222;transform:scaleX(0.7665);">F</div>
<div class="r" style="left:698px;top:242px;width:1px;height:23px;background:#bdbdbd;"></div>
<div class="t" style="left:645.75px;top:246.40px;font-size:16.3px;color:#222;transform:scaleX(0.8275);">G</div>
<div class="r" style="left:794px;top:242px;width:1px;height:23px;background:#bdbdbd;"></div>
<div class="t" style="left:741.32px;top:246.40px;font-size:16.3px;color:#222;transform:scaleX(0.8799);">H</div>
<div class="r" style="left:889px;top:242px;width:1px;height:23px;background:#bdbdbd;"></div>
<div class="t" style="left:839.91px;top:246.40px;font-size:16.3px;color:#222;transform:scaleX(0.9252);">I</div>
<div class="r" style="left:985px;top:242px;width:1px;height:23px;background:#bdbdbd;"></div>
<div class="t" style="left:934.85px;top:246.40px;font-size:16.3px;color:#222;transform:scaleX(0.6508);">J</div>
<div class="r" style="left:1080px;top:242px;width:1px;height:23px;background:#bdbdbd;"></div>
<div class="t" style="left:1028.68px;top:246.40px;font-size:16.3px;color:#222;transform:scaleX(0.7952);">K</div>
<div class="r" style="left:1176px;top:242px;width:1px;height:23px;background:#bdbdbd;"></div>
<div class="t" style="left:1125.01px;top:246.40px;font-size:16.3px;color:#222;transform:scaleX(0.7703);">L</div>
<svg class="r" style="left:12px;top:246px;" width="17" height="17" viewBox="0 0 17 17"><path d="M16,0.5 V16 H0.5 Z" fill="#b5b5b5"/></svg>
<div class="r" style="left:30px;top:265px;width:1px;height:706px;background:#bdbdbd;"></div>
<div class="r" style="left:0px;top:265px;width:30px;height:25px;background:#d2d2d2;"></div>
<div class="t" style="left:11.87px;top:271.00px;font-size:16.3px;color:#217346;transform:scaleX(0.9116);">1</div>
<div class="r" style="left:0px;top:290px;width:30px;height:1px;background:#bdbdbd;"></div>
<div class="r" style="left:31px;top:290px;width:1183px;height:1px;background:#d6d6d6;"></div>
<div class="t" style="left:11.87px;top:295.50px;font-size:16.3px;color:#222;transform:scaleX(0.9116);">2</div>
<div class="r" style="left:0px;top:314px;width:30px;height:1px;background:#bdbdbd;"></div>
<div class="r" style="left:31px;top:314px;width:1183px;height:1px;background:#d6d6d6;"></div>
<div class="t" style="left:11.87px;top:320.00px;font-size:16.3px;color:#222;transform:scaleX(0.9116);">3</div>
<div class="r" style="left:0px;top:339px;width:30px;height:1px;background:#bdbdbd;"></div>
<div class="r" style="left:31px;top:339px;width:1183px;height:1px;background:#d6d6d6;"></div>
<div class="t" style="left:11.87px;top:345.00px;font-size:16.3px;color:#222;transform:scaleX(0.9116);">4</div>
<div class="r" style="left:0px;top:364px;width:30px;height:1px;background:#bdbdbd;"></div>
<div class="r" style="left:31px;top:364px;width:1183px;height:1px;background:#d6d6d6;"></div>
<div class="t" style="left:11.87px;top:369.50px;font-size:16.3px;color:#222;transform:scaleX(0.9116);">5</div>
<div class="r" style="left:0px;top:388px;width:30px;height:1px;background:#bdbdbd;"></div>
<div class="r" style="left:31px;top:388px;width:1183px;height:1px;background:#d6d6d6;"></div>
<div class="t" style="left:11.87px;top:394.00px;font-size:16.3px;color:#222;transform:scaleX(0.9116);">6</div>
<div class="r" style="left:0px;top:413px;width:30px;height:1px;background:#bdbdbd;"></div>
<div class="r" style="left:31px;top:413px;width:1183px;height:1px;background:#d6d6d6;"></div>
<div class="t" style="left:11.87px;top:419.00px;font-size:16.3px;color:#222;transform:scaleX(0.9116);">7</div>
<div class="r" style="left:0px;top:438px;width:30px;height:1px;background:#bdbdbd;"></div>
<div class="r" style="left:31px;top:438px;width:1183px;height:1px;background:#d6d6d6;"></div>
<div class="t" style="left:11.87px;top:443.50px;font-size:16.3px;color:#222;transform:scaleX(0.9116);">8</div>
<div class="r" style="left:0px;top:462px;width:30px;height:1px;background:#bdbdbd;"></div>
<div class="r" style="left:31px;top:462px;width:1183px;height:1px;background:#d6d6d6;"></div>
<div class="t" style="left:11.87px;top:468.00px;font-size:16.3px;color:#222;transform:scaleX(0.9116);">9</div>
<div class="r" style="left:0px;top:487px;width:30px;height:1px;background:#bdbdbd;"></div>
<div class="r" style="left:31px;top:487px;width:1183px;height:1px;background:#d6d6d6;"></div>
<div class="t" style="left:7.74px;top:493.00px;font-size:16.3px;color:#222;transform:scaleX(0.9116);">10</div>
<div class="r" style="left:0px;top:512px;width:30px;height:1px;background:#bdbdbd;"></div>
<div class="r" style="left:31px;top:512px;width:1183px;height:1px;background:#d6d6d6;"></div>
<div class="t" style="left:7.74px;top:517.50px;font-size:16.3px;color:#222;transform:scaleX(0.9116);">11</div>
<div class="r" style="left:0px;top:536px;width:30px;height:1px;background:#bdbdbd;"></div>
<div class="r" style="left:31px;top:536px;width:1183px;height:1px;background:#d6d6d6;"></div>
<div class="t" style="left:7.74px;top:542.00px;font-size:16.3px;color:#222;transform:scaleX(0.9116);">12</div>
<div class="r" style="left:0px;top:561px;width:30px;height:1px;background:#bdbdbd;"></div>
<div class="r" style="left:31px;top:561px;width:1183px;height:1px;background:#d6d6d6;"></div>
<div class="t" style="left:7.74px;top:566.50px;font-size:16.3px;color:#222;transform:scaleX(0.9116);">13</div>
<div class="r" style="left:0px;top:585px;width:30px;height:1px;background:#bdbdbd;"></div>
<div class="r" style="left:31px;top:585px;width:1183px;height:1px;background:#d6d6d6;"></div>
<div class="t" style="left:7.74px;top:591.00px;font-size:16.3px;color:#222;transform:scaleX(0.9116);">14</div>
<div class="r" style="left:0px;top:610px;width:30px;height:1px;background:#bdbdbd;"></div>
<div class="r" style="left:31px;top:610px;width:1183px;height:1px;background:#d6d6d6;"></div>
<div class="t" style="left:7.74px;top:616.00px;font-size:16.3px;color:#222;transform:scaleX(0.9116);">15</div>
<div class="r" style="left:0px;top:635px;width:30px;height:1px;background:#bdbdbd;"></div>
<div class="r" style="left:31px;top:635px;width:1183px;height:1px;background:#d6d6d6;"></div>
<div class="t" style="left:7.74px;top:640.50px;font-size:16.3px;color:#222;transform:scaleX(0.9116);">16</div>
<div class="r" style="left:0px;top:659px;width:30px;height:1px;background:#bdbdbd;"></div>
<div class="r" style="left:31px;top:659px;width:1183px;height:1px;background:#d6d6d6;"></div>
<div class="t" style="left:7.74px;top:665.00px;font-size:16.3px;color:#222;transform:scaleX(0.9116);">17</div>
<div class="r" style="left:0px;top:684px;width:30px;height:1px;background:#bdbdbd;"></div>
<div class="r" style="left:31px;top:684px;width:1183px;height:1px;background:#d6d6d6;"></div>
<div class="t" style="left:7.74px;top:690.00px;font-size:16.3px;color:#222;transform:scaleX(0.9116);">18</div>
<div class="r" style="left:0px;top:709px;width:30px;height:1px;background:#bdbdbd;"></div>
<div class="r" style="left:31px;top:709px;width:1183px;height:1px;background:#d6d6d6;"></div>
<div class="t" style="left:7.74px;top:714.50px;font-size:16.3px;color:#222;transform:scaleX(0.9116);">19</div>
<div class="r" style="left:0px;top:733px;width:30px;height:1px;background:#bdbdbd;"></div>
<div class="r" style="left:31px;top:733px;width:1183px;height:1px;background:#d6d6d6;"></div>
<div class="t" style="left:7.74px;top:739.00px;font-size:16.3px;color:#222;transform:scaleX(0.9116);">20</div>
<div class="r" style="left:0px;top:758px;width:30px;height:1px;background:#bdbdbd;"></div>
<div class="r" style="left:31px;top:758px;width:1183px;height:1px;background:#d6d6d6;"></div>
<div class="t" style="left:7.74px;top:763.50px;font-size:16.3px;color:#222;transform:scaleX(0.9116);">21</div>
<div class="r" style="left:0px;top:782px;width:30px;height:1px;background:#bdbdbd;"></div>
<div class="r" style="left:31px;top:782px;width:1183px;height:1px;background:#d6d6d6;"></div>
<div class="t" style="left:7.74px;top:788.00px;font-size:16.3px;color:#222;transform:scaleX(0.9116);">22</div>
<div class="r" style="left:0px;top:807px;width:30px;height:1px;background:#bdbdbd;"></div>
<div class="r" style="left:31px;top:807px;width:1183px;height:1px;background:#d6d6d6;"></div>
<div class="t" style="left:7.74px;top:813.00px;font-size:16.3px;color:#222;transform:scaleX(0.9116);">23</div>
<div class="r" style="left:0px;top:832px;width:30px;height:1px;background:#bdbdbd;"></div>
<div class="r" style="left:31px;top:832px;width:1183px;height:1px;background:#d6d6d6;"></div>
<div class="t" style="left:7.74px;top:837.50px;font-size:16.3px;color:#222;transform:scaleX(0.9116);">24</div>
<div class="r" style="left:0px;top:856px;width:30px;height:1px;background:#bdbdbd;"></div>
<div class="r" style="left:31px;top:856px;width:1183px;height:1px;background:#d6d6d6;"></div>
<div class="t" style="left:7.74px;top:862.00px;font-size:16.3px;color:#222;transform:scaleX(0.9116);">25</div>
<div class="r" style="left:0px;top:881px;width:30px;height:1px;background:#bdbdbd;"></div>
<div class="r" style="left:31px;top:881px;width:1183px;height:1px;background:#d6d6d6;"></div>
<div class="t" style="left:7.74px;top:887.00px;font-size:16.3px;color:#222;transform:scaleX(0.9116);">26</div>
<div class="r" style="left:0px;top:906px;width:30px;height:1px;background:#bdbdbd;"></div>
<div class="r" style="left:31px;top:906px;width:1183px;height:1px;background:#d6d6d6;"></div>
<div class="t" style="left:7.74px;top:911.50px;font-size:16.3px;color:#222;transform:scaleX(0.9116);">27</div>
<div class="r" style="left:0px;top:930px;width:30px;height:1px;background:#bdbdbd;"></div>
<div class="r" style="left:31px;top:930px;width:1183px;height:1px;background:#d6d6d6;"></div>
<div class="t" style="left:7.74px;top:936.00px;font-size:16.3px;color:#222;transform:scaleX(0.9116);">28</div>
<div class="r" style="left:0px;top:955px;width:30px;height:1px;background:#bdbdbd;"></div>
<div class="r" style="left:31px;top:955px;width:1183px;height:1px;background:#d6d6d6;"></div>
<div class="t" style="left:7.74px;top:961.00px;font-size:16.3px;color:#222;transform:scaleX(0.9116);">29</div>
<div class="r" style="left:126px;top:265px;width:1px;height:706px;background:#d6d6d6;"></div>
<div class="r" style="left:221px;top:265px;width:1px;height:706px;background:#d6d6d6;"></div>
<div class="r" style="left:317px;top:265px;width:1px;height:706px;background:#d6d6d6;"></div>
<div class="r" style="left:412px;top:265px;width:1px;height:706px;background:#d6d6d6;"></div>
<div class="r" style="left:508px;top:265px;width:1px;height:706px;background:#d6d6d6;"></div>
<div class="r" style="left:603px;top:265px;width:1px;height:706px;background:#d6d6d6;"></div>
<div class="r" style="left:698px;top:265px;width:1px;height:706px;background:#d6d6d6;"></div>
<div class="r" style="left:794px;top:265px;width:1px;height:706px;background:#d6d6d6;"></div>
<div class="r" style="left:889px;top:265px;width:1px;height:706px;background:#d6d6d6;"></div>
<div class="r" style="left:985px;top:265px;width:1px;height:706px;background:#d6d6d6;"></div>
<div class="r" style="left:1080px;top:265px;width:1px;height:706px;background:#d6d6d6;"></div>
<div class="r" style="left:1176px;top:265px;width:1px;height:706px;background:#d6d6d6;"></div>
<div class="r" style="left:31px;top:266px;width:1144px;height:306px;background:#eddcbb;"></div>
<div class="r" style="left:31px;top:266px;width:1144px;height:1.5px;background:#f6eedd;"></div>
<div class="r" style="left:31px;top:267.5px;width:1144px;height:16.5px;background:#f0dfc1;"></div>
<div class="r" style="left:31px;top:284px;width:1144px;height:1px;background:#d8c5b0;"></div>
<div class="r" style="left:31px;top:301px;width:1144px;height:1px;background:#d8c5b0;"></div>
<div class="r" style="left:31px;top:318px;width:1144px;height:1px;background:#d8c5b0;"></div>
<div class="r" style="left:31px;top:335px;width:1144px;height:1px;background:#d8c5b0;"></div>
<div class="r" style="left:31px;top:352px;width:1144px;height:1px;background:#d8c5b0;"></div>
<div class="r" style="left:31px;top:368px;width:1144px;height:1px;background:#d8c5b0;"></div>
<div class="r" style="left:31px;top:385px;width:1144px;height:1px;background:#d8c5b0;"></div>
<div class="r" style="left:31px;top:402px;width:1144px;height:1px;background:#d8c5b0;"></div>
<div class="r" style="left:31px;top:419px;width:1144px;height:1px;background:#d8c5b0;"></div>
<div class="r" style="left:31px;top:436px;width:1144px;height:1px;background:#d8c5b0;"></div>
<div class="r" style="left:31px;top:453px;width:1144px;height:1px;background:#d8c5b0;"></div>
<div class="r" style="left:31px;top:470px;width:1144px;height:1px;background:#d8c5b0;"></div>
<div class="r" style="left:31px;top:487px;width:1144px;height:1px;background:#d8c5b0;"></div>
<div class="r" style="left:31px;top:504px;width:1144px;height:1px;background:#d8c5b0;"></div>
<div class="r" style="left:31px;top:521px;width:1144px;height:1px;background:#d8c5b0;"></div>
<div class="r" style="left:31px;top:538px;width:1144px;height:1px;background:#d8c5b0;"></div>
<div class="r" style="left:31px;top:554px;width:1144px;height:1px;background:#d8c5b0;"></div>
<div class="r" style="left:31px;top:571px;width:1144px;height:1px;background:#d8c5b0;"></div>
<div class="r" style="left:31px;top:571px;width:1144px;height:1px;background:#c8bba8;"></div>
<svg class="r" style="left:170px;top:269px;" width="12" height="14" viewBox="0 0 12 14"><rect x="0.5" y="0.5" width="11" height="13" fill="#fff" stroke="#bdbdbd"/><path d="M3.0,6 L6.0,9 L9.0,6" fill="none" stroke="#555" stroke-width="1.3"/></svg>
<svg class="r" style="left:415px;top:269px;" width="12" height="14" viewBox="0 0 12 14"><rect x="0.5" y="0.5" width="11" height="13" fill="#fff" stroke="#bdbdbd"/><path d="M3.0,6 L6.0,9 L9.0,6" fill="none" stroke="#555" stroke-width="1.3"/></svg>
<svg class="r" style="left:493px;top:269px;" width="11.5" height="14" viewBox="0 0 11.5 14"><rect x="0.5" y="0.5" width="10.5" height="13" fill="#fff" stroke="#bdbdbd"/><path d="M2.75,6 L5.75,9 L8.75,6" fill="none" stroke="#555" stroke-width="1.3"/></svg>
<svg class="r" style="left:681.5px;top:269px;" width="12.5" height="14" viewBox="0 0 12.5 14"><rect x="0.5" y="0.5" width="11.5" height="13" fill="#fff" stroke="#bdbdbd"/><path d="M3.25,6 L6.25,9 L9.25,6" fill="none" stroke="#555" stroke-width="1.3"/></svg>
<svg class="r" style="left:802.5px;top:269px;" width="12.0" height="14" viewBox="0 0 12.0 14"><rect x="0.5" y="0.5" width="11.0" height="13" fill="#fff" stroke="#bdbdbd"/><path d="M3.0,6 L6.0,9 L9.0,6" fill="none" stroke="#555" stroke-width="1.3"/></svg>
<svg class="r" style="left:959.5px;top:269px;" width="12.0" height="14" viewBox="0 0 12.0 14"><rect x="0.5" y="0.5" width="11.0" height="13" fill="#fff" stroke="#bdbdbd"/><path d="M3.0,6 L6.0,9 L9.0,6" fill="none" stroke="#555" stroke-width="1.3"/></svg>
<svg class="r" style="left:1161px;top:269px;" width="12" height="14" viewBox="0 0 12 14"><rect x="0.5" y="0.5" width="11" height="13" fill="#fff" stroke="#bdbdbd"/><path d="M3.0,6 L6.0,9 L9.0,6" fill="none" stroke="#555" stroke-width="1.3"/></svg>
<div class="t" style="left:33.00px;top:271.09px;font-size:11px;color:#2a2720;font-weight:bold;transform:scaleX(0.9674);">d</div>
<div class="t" style="left:187.10px;top:271.09px;font-size:11px;color:#2a2720;font-weight:bold;transform:scaleX(0.9513);">Name</div>
<div class="t" style="left:431.60px;top:271.09px;font-size:11px;color:#2a2720;font-weight:bold;transform:scaleX(0.9089);">Description</div>
<div class="t" style="left:508.90px;top:271.09px;font-size:11px;color:#2a2720;font-weight:bold;transform:scaleX(0.9092);">Group</div>
<div class="t" style="left:698.00px;top:271.09px;font-size:11px;color:#2a2720;font-weight:bold;transform:scaleX(0.8881);">Type</div>
<div class="t" style="left:818.60px;top:271.09px;font-size:11px;color:#2a2720;font-weight:bold;transform:scaleX(0.9249);">DataConnection</div>
<div class="t" style="left:975.60px;top:271.09px;font-size:11px;color:#2a2720;font-weight:bold;transform:scaleX(0.8701);">Address</div>
<div class="r" style="left:33px;top:266px;width:140px;height:306px;overflow:hidden">
<div class="t" style="left:-2.70px;top:22.79px;font-size:11px;color:#3d3a33;transform:scaleX(0.9900);-webkit-text-stroke:0.3px #4a463c;">5eeb2369d92dbf00012a7329</div>
<div class="t" style="left:-2.70px;top:39.69px;font-size:11px;color:#3d3a33;transform:scaleX(0.9900);-webkit-text-stroke:0.3px #4a463c;">5f0562c27480c10001ea3cc3</div>
<div class="t" style="left:-2.70px;top:56.59px;font-size:11px;color:#3d3a33;transform:scaleX(0.9900);-webkit-text-stroke:0.3px #4a463c;">5f05da2f9241f70001358f21</div>
<div class="t" style="left:-2.70px;top:73.49px;font-size:11px;color:#3d3a33;transform:scaleX(0.9900);-webkit-text-stroke:0.3px #4a463c;">5f06ac10fedfd50001505d70</div>
<div class="t" style="left:-2.70px;top:90.39px;font-size:11px;color:#3d3a33;transform:scaleX(0.9900);-webkit-text-stroke:0.3px #4a463c;">5f43b7e1742ccc0001abe449</div>
<div class="t" style="left:-2.70px;top:107.29px;font-size:11px;color:#3d3a33;transform:scaleX(0.9900);-webkit-text-stroke:0.3px #4a463c;">5f4650960791990001903c8c</div>
<div class="t" style="left:-2.70px;top:124.19px;font-size:11px;color:#3d3a33;transform:scaleX(0.9900);-webkit-text-stroke:0.3px #4a463c;">5f4cf5f2f21ee30001818804</div>
<div class="t" style="left:-2.70px;top:141.09px;font-size:11px;color:#3d3a33;transform:scaleX(0.9900);-webkit-text-stroke:0.3px #4a463c;">5f4cf5f6f21ee30001818807</div>
<div class="t" style="left:-2.70px;top:157.99px;font-size:11px;color:#3d3a33;transform:scaleX(0.9900);-webkit-text-stroke:0.3px #4a463c;">5f573d3b30ee0b00012b6df2</div>
<div class="t" style="left:-2.70px;top:174.89px;font-size:11px;color:#3d3a33;transform:scaleX(0.9900);-webkit-text-stroke:0.3px #4a463c;">5f5a00bad7b2ef0001ab9db5</div>
<div class="t" style="left:-2.70px;top:191.79px;font-size:11px;color:#3d3a33;transform:scaleX(0.9900);-webkit-text-stroke:0.3px #4a463c;">5f631dd1dd3d0200013ce76f</div>
<div class="t" style="left:-2.70px;top:208.69px;font-size:11px;color:#3d3a33;transform:scaleX(0.9900);-webkit-text-stroke:0.3px #4a463c;">5f632a69dd3d0200013ce77f</div>
<div class="t" style="left:-2.70px;top:225.59px;font-size:11px;color:#3d3a33;transform:scaleX(0.9900);-webkit-text-stroke:0.3px #4a463c;">5f8d249d8025d4adb98cc563</div>
<div class="t" style="left:-2.70px;top:242.49px;font-size:11px;color:#3d3a33;transform:scaleX(0.9900);-webkit-text-stroke:0.3px #4a463c;">5f9ffe5ba54d1330e759aceb</div>
<div class="t" style="left:-2.70px;top:259.39px;font-size:11px;color:#3d3a33;transform:scaleX(0.9900);-webkit-text-stroke:0.3px #4a463c;">5fa8e137d8676cadad89e35e</div>
<div class="t" style="left:-2.70px;top:276.29px;font-size:11px;color:#3d3a33;transform:scaleX(0.9900);-webkit-text-stroke:0.3px #4a463c;">5fc0d99ae453f6ecefcd4681</div>
<div class="t" style="left:-2.70px;top:293.19px;font-size:11px;color:#3d3a33;transform:scaleX(0.9900);-webkit-text-stroke:0.3px #4a463c;">5ffc147de559e0e60235fdf9</div>
</div>
<div class="t" style="left:187.10px;top:288.79px;font-size:11px;color:#3d3a33;transform:scaleX(0.9550);-webkit-text-stroke:0.3px #4a463c;">Zähler (Jacobs IOT) Temperatur</div>
<div class="t" style="left:431.60px;top:288.79px;font-size:11px;color:#3d3a33;transform:scaleX(0.9550);-webkit-text-stroke:0.3px #4a463c;">Änderung2</div>
<div class="t" style="left:508.50px;top:288.79px;font-size:11px;color:#3d3a33;transform:scaleX(0.9900);-webkit-text-stroke:0.3px #4a463c;">5eeb1eebd92dbf00012a7309</div>
<div class="t" style="left:698.00px;top:288.79px;font-size:11px;color:#3d3a33;transform:scaleX(0.9550);-webkit-text-stroke:0.3px #4a463c;">Counter</div>
<div class="t" style="left:818.60px;top:288.79px;font-size:11px;color:#3d3a33;transform:scaleX(0.9900);-webkit-text-stroke:0.3px #4a463c;">5ee8c62d1e340900013144d2</div>
<div class="t" style="left:975.80px;top:288.79px;font-size:11px;color:#3d3a33;transform:scaleX(0.9550);-webkit-text-stroke:0.3px #4a463c;">ns=2;s=Demo.Static.Scalar.Int32</div>
<div class="t" style="left:187.10px;top:305.69px;font-size:11px;color:#3d3a33;transform:scaleX(0.9550);-webkit-text-stroke:0.3px #4a463c;">Digitaler Ausgang (IOT Jacob)</div>
<div class="t" style="left:508.50px;top:305.69px;font-size:11px;color:#3d3a33;transform:scaleX(0.9900);-webkit-text-stroke:0.3px #4a463c;">5eeb1eebd92dbf00012a7309</div>
<div class="t" style="left:698.00px;top:305.69px;font-size:11px;color:#3d3a33;transform:scaleX(0.9550);-webkit-text-stroke:0.3px #4a463c;">DigitalInOut</div>
<div class="t" style="left:818.60px;top:305.69px;font-size:11px;color:#3d3a33;transform:scaleX(0.9900);-webkit-text-stroke:0.3px #4a463c;">5ee8c62d1e340900013144d2</div>
<div class="t" style="left:975.80px;top:305.69px;font-size:11px;color:#3d3a33;transform:scaleX(0.9550);-webkit-text-stroke:0.3px #4a463c;">ns=2;s=Demo.Static.Scalar.Boolean</div>
<div class="t" style="left:187.10px;top:322.59px;font-size:11px;color:#3d3a33;transform:scaleX(0.9550);-webkit-text-stroke:0.3px #4a463c;">Zähler 2 (Jacobs IOT)</div>
<div class="t" style="left:508.50px;top:322.59px;font-size:11px;color:#3d3a33;transform:scaleX(0.9900);-webkit-text-stroke:0.3px #4a463c;">5eeb1eebd92dbf00012a7309</div>
<div class="t" style="left:698.00px;top:322.59px;font-size:11px;color:#3d3a33;transform:scaleX(0.9550);-webkit-text-stroke:0.3px #4a463c;">Counter</div>
<div class="t" style="left:818.60px;top:322.59px;font-size:11px;color:#3d3a33;transform:scaleX(0.9900);-webkit-text-stroke:0.3px #4a463c;">5ee8c62d1e340900013144d2</div>
<div class="t" style="left:975.80px;top:322.59px;font-size:11px;color:#3d3a33;transform:scaleX(0.9550);-webkit-text-stroke:0.3px #4a463c;">ns=2;s=Demo.Static.Scalar.Int16</div>
<div class="t" style="left:187.10px;top:339.49px;font-size:11px;color:#3d3a33;transform:scaleX(0.9550);-webkit-text-stroke:0.3px #4a463c;">Analog Eingang Dynamisch (IOT Jacob)</div>
<div class="t" style="left:508.50px;top:339.49px;font-size:11px;color:#3d3a33;transform:scaleX(0.9900);-webkit-text-stroke:0.3px #4a463c;">5eeb1eebd92dbf00012a7309</div>
<div class="t" style="left:698.00px;top:339.49px;font-size:11px;color:#3d3a33;transform:scaleX(0.9550);-webkit-text-stroke:0.3px #4a463c;">AnalogInput</div>
<div class="t" style="left:818.60px;top:339.49px;font-size:11px;color:#3d3a33;transform:scaleX(0.9900);-webkit-text-stroke:0.3px #4a463c;">5ee8c62d1e340900013144d2</div>
<div class="t" style="left:975.80px;top:339.49px;font-size:11px;color:#3d3a33;transform:scaleX(0.9550);-webkit-text-stroke:0.3px #4a463c;">ns=2;s=Demo.Dynamic.Scalar.Double</div>
<div class="t" style="left:187.10px;top:356.39px;font-size:11px;color:#3d3a33;transform:scaleX(0.9550);-webkit-text-stroke:0.3px #4a463c;">Jonas Zähler 1</div>
<div class="t" style="left:508.50px;top:356.39px;font-size:11px;color:#3d3a33;transform:scaleX(0.9900);-webkit-text-stroke:0.3px #4a463c;">5eeb1eebd92dbf00012a7309</div>
<div class="t" style="left:698.00px;top:356.39px;font-size:11px;color:#3d3a33;transform:scaleX(0.9550);-webkit-text-stroke:0.3px #4a463c;">Counter</div>
<div class="t" style="left:818.60px;top:356.39px;font-size:11px;color:#3d3a33;transform:scaleX(0.9900);-webkit-text-stroke:0.3px #4a463c;">5f4351ef18a88100012685c9</div>
<div class="t" style="left:975.80px;top:356.39px;font-size:11px;color:#3d3a33;transform:scaleX(0.9550);-webkit-text-stroke:0.3px #4a463c;">ns=2;s=Demo.Dynamic.Scalar.Int32</div>
<div class="t" style="left:187.10px;top:373.29px;font-size:11px;color:#3d3a33;transform:scaleX(0.9550);-webkit-text-stroke:0.3px #4a463c;">Digitaler Ausgang Dynamisch (IOT Jacob)</div>
<div class="t" style="left:508.50px;top:373.29px;font-size:11px;color:#3d3a33;transform:scaleX(0.9900);-webkit-text-stroke:0.3px #4a463c;">5eeb1eebd92dbf00012a7309</div>
<div class="t" style="left:698.00px;top:373.29px;font-size:11px;color:#3d3a33;transform:scaleX(0.9550);-webkit-text-stroke:0.3px #4a463c;">DigitalInOut</div>
<div class="t" style="left:818.60px;top:373.29px;font-size:11px;color:#3d3a33;transform:scaleX(0.9900);-webkit-text-stroke:0.3px #4a463c;">5ee8c62d1e340900013144d2</div>
<div class="t" style="left:975.80px;top:373.29px;font-size:11px;color:#3d3a33;transform:scaleX(0.9550);-webkit-text-stroke:0.3px #4a463c;">ns=2;s=Demo.Dynamic.Scalar.Boolean</div>
<div class="t" style="left:187.10px;top:390.19px;font-size:11px;color:#3d3a33;transform:scaleX(0.9550);-webkit-text-stroke:0.3px #4a463c;">Latitude (IOT Jacob)</div>
<div class="t" style="left:508.50px;top:390.19px;font-size:11px;color:#3d3a33;transform:scaleX(0.9900);-webkit-text-stroke:0.3px #4a463c;">5eeb1eebd92dbf00012a7309</div>
<div class="t" style="left:698.00px;top:390.19px;font-size:11px;color:#3d3a33;transform:scaleX(0.9550);-webkit-text-stroke:0.3px #4a463c;">AnalogInput</div>
<div class="t" style="left:818.60px;top:390.19px;font-size:11px;color:#3d3a33;transform:scaleX(0.9900);-webkit-text-stroke:0.3px #4a463c;">5ee8c62d1e340900013144d2</div>
<div class="t" style="left:975.80px;top:390.19px;font-size:11px;color:#3d3a33;transform:scaleX(0.9550);-webkit-text-stroke:0.3px #4a463c;">ns=2;s=Demo.Static.Scalar.Int32</div>
<div class="t" style="left:187.10px;top:407.09px;font-size:11px;color:#3d3a33;transform:scaleX(0.9550);-webkit-text-stroke:0.3px #4a463c;">Longitude (IOT Jacob)</div>
<div class="t" style="left:508.50px;top:407.09px;font-size:11px;color:#3d3a33;transform:scaleX(0.9900);-webkit-text-stroke:0.3px #4a463c;">5eeb1eebd92dbf00012a7309</div>
<div class="t" style="left:698.00px;top:407.09px;font-size:11px;color:#3d3a33;transform:scaleX(0.9550);-webkit-text-stroke:0.3px #4a463c;">AnalogInput</div>
<div class="t" style="left:818.60px;top:407.09px;font-size:11px;color:#3d3a33;transform:scaleX(0.9900);-webkit-text-stroke:0.3px #4a463c;">5ee8c62d1e340900013144d2</div>
<div class="t" style="left:975.80px;top:407.09px;font-size:11px;color:#3d3a33;transform:scaleX(0.9550);-webkit-text-stroke:0.3px #4a463c;">ns=2;s=Demo.Static.Scalar.Int16</div>
<div class="t" style="left:187.10px;top:423.99px;font-size:11px;color:#3d3a33;transform:scaleX(0.9550);-webkit-text-stroke:0.3px #4a463c;">Analoger Ausgang (IOT Jonas)</div>
<div class="t" style="left:508.50px;top:423.99px;font-size:11px;color:#3d3a33;transform:scaleX(0.9900);-webkit-text-stroke:0.3px #4a463c;">5eeb1eebd92dbf00012a7309</div>
<div class="t" style="left:698.00px;top:423.99px;font-size:11px;color:#3d3a33;transform:scaleX(0.9550);-webkit-text-stroke:0.3px #4a463c;">AnalogInOut</div>
<div class="t" style="left:818.60px;top:423.99px;font-size:11px;color:#3d3a33;transform:scaleX(0.9900);-webkit-text-stroke:0.3px #4a463c;">5f4351ef18a88100012685c9</div>
<div class="t" style="left:975.80px;top:423.99px;font-size:11px;color:#3d3a33;transform:scaleX(0.9550);-webkit-text-stroke:0.3px #4a463c;">ns=2;s=Demo.Static.Scalar.Double</div>
<div class="t" style="left:187.10px;top:440.89px;font-size:11px;color:#3d3a33;transform:scaleX(0.9550);-webkit-text-stroke:0.3px #4a463c;">Überschlag Counter (IOT Jacob)</div>
<div class="t" style="left:508.50px;top:440.89px;font-size:11px;color:#3d3a33;transform:scaleX(0.9900);-webkit-text-stroke:0.3px #4a463c;">5eeb1eebd92dbf00012a7309</div>
<div class="t" style="left:698.00px;top:440.89px;font-size:11px;color:#3d3a33;transform:scaleX(0.9550);-webkit-text-stroke:0.3px #4a463c;">Counter</div>
<div class="t" style="left:818.60px;top:440.89px;font-size:11px;color:#3d3a33;transform:scaleX(0.9900);-webkit-text-stroke:0.3px #4a463c;">5ee8c62d1e340900013144d2</div>
<div class="t" style="left:975.80px;top:440.89px;font-size:11px;color:#3d3a33;transform:scaleX(0.9550);-webkit-text-stroke:0.3px #4a463c;">ns=2;s=Demo.Dynamic.Scalar.Int16</div>
<div class="t" style="left:187.10px;top:457.79px;font-size:11px;color:#3d3a33;transform:scaleX(0.9550);-webkit-text-stroke:0.3px #4a463c;">LiveFormelSignal</div>
<div class="t" style="left:508.50px;top:457.79px;font-size:11px;color:#3d3a33;transform:scaleX(0.9900);-webkit-text-stroke:0.3px #4a463c;">5eeb1eebd92dbf00012a7309</div>
<div class="t" style="left:698.00px;top:457.79px;font-size:11px;color:#3d3a33;transform:scaleX(0.9550);-webkit-text-stroke:0.3px #4a463c;">AnalogInput</div>
<div class="t" style="left:975.80px;top:457.79px;font-size:11px;color:#3d3a33;transform:scaleX(0.9550);-webkit-text-stroke:0.3px #4a463c;">liveFormel</div>
<div class="t" style="left:187.10px;top:474.69px;font-size:11px;color:#3d3a33;transform:scaleX(0.9550);-webkit-text-stroke:0.3px #4a463c;">NoValueSignal</div>
<div class="t" style="left:508.50px;top:474.69px;font-size:11px;color:#3d3a33;transform:scaleX(0.9900);-webkit-text-stroke:0.3px #4a463c;">5eeb1eebd92dbf00012a7309</div>
<div class="t" style="left:698.00px;top:474.69px;font-size:11px;color:#3d3a33;transform:scaleX(0.9550);-webkit-text-stroke:0.3px #4a463c;">AnalogInput</div>
<div class="t" style="left:187.10px;top:491.59px;font-size:11px;color:#3d3a33;transform:scaleX(0.9550);-webkit-text-stroke:0.3px #4a463c;">Monitoringtest Signal</div>
<div class="t" style="left:508.50px;top:491.59px;font-size:11px;color:#3d3a33;transform:scaleX(0.9900);-webkit-text-stroke:0.3px #4a463c;">5eeb1eebd92dbf00012a7309</div>
<div class="t" style="left:698.00px;top:491.59px;font-size:11px;color:#3d3a33;transform:scaleX(0.9550);-webkit-text-stroke:0.3px #4a463c;">AnalogInput</div>
<div class="t" style="left:818.60px;top:491.59px;font-size:11px;color:#3d3a33;transform:scaleX(0.9900);-webkit-text-stroke:0.3px #4a463c;">5ee8c62d1e340900013144d2</div>
<div class="t" style="left:975.80px;top:491.59px;font-size:11px;color:#3d3a33;transform:scaleX(0.9550);-webkit-text-stroke:0.3px #4a463c;">ns=2;s=Demo.Static.Scalar.Int32</div>
<div class="t" style="left:187.10px;top:508.49px;font-size:11px;color:#3d3a33;transform:scaleX(0.9550);-webkit-text-stroke:0.3px #4a463c;">Test Signal</div>
<div class="t" style="left:508.50px;top:508.49px;font-size:11px;color:#3d3a33;transform:scaleX(0.9900);-webkit-text-stroke:0.3px #4a463c;">5eeb1eebd92dbf00012a7309</div>
<div class="t" style="left:698.00px;top:508.49px;font-size:11px;color:#3d3a33;transform:scaleX(0.9550);-webkit-text-stroke:0.3px #4a463c;">AnalogInput</div>
<div class="t" style="left:187.10px;top:525.39px;font-size:11px;color:#3d3a33;transform:scaleX(0.9550);-webkit-text-stroke:0.3px #4a463c;">Analoger Ausgang (IOT Jacob)</div>
<div class="t" style="left:508.50px;top:525.39px;font-size:11px;color:#3d3a33;transform:scaleX(0.9900);-webkit-text-stroke:0.3px #4a463c;">5eeb1eebd92dbf00012a7309</div>
<div class="t" style="left:698.00px;top:525.39px;font-size:11px;color:#3d3a33;transform:scaleX(0.9550);-webkit-text-stroke:0.3px #4a463c;">AnalogInOut</div>
<div class="t" style="left:818.60px;top:525.39px;font-size:11px;color:#3d3a33;transform:scaleX(0.9900);-webkit-text-stroke:0.3px #4a463c;">5ee8c62d1e340900013144d2</div>
<div class="t" style="left:975.80px;top:525.39px;font-size:11px;color:#3d3a33;transform:scaleX(0.9550);-webkit-text-stroke:0.3px #4a463c;">ns=2;s=Demo.Static.Scalar.Double</div>
<div class="t" style="left:187.10px;top:542.29px;font-size:11px;color:#3d3a33;transform:scaleX(0.9550);-webkit-text-stroke:0.3px #4a463c;">Betriebsstunden</div>
<div class="t" style="left:508.50px;top:542.29px;font-size:11px;color:#3d3a33;transform:scaleX(0.9900);-webkit-text-stroke:0.3px #4a463c;">5eeb1eebd92dbf00012a7309</div>
<div class="t" style="left:698.00px;top:542.29px;font-size:11px;color:#3d3a33;transform:scaleX(0.9550);-webkit-text-stroke:0.3px #4a463c;">DigitalInput</div>
<div class="t" style="left:818.60px;top:542.29px;font-size:11px;color:#3d3a33;transform:scaleX(0.9900);-webkit-text-stroke:0.3px #4a463c;">5ee8c62d1e340900013144d2</div>
<div class="t" style="left:975.80px;top:542.29px;font-size:11px;color:#3d3a33;transform:scaleX(0.9550);-webkit-text-stroke:0.3px #4a463c;">ns=2;s=Demo.Static.Scalar.Boolean</div>
<div class="t" style="left:187.10px;top:559.19px;font-size:11px;color:#3d3a33;transform:scaleX(0.9550);-webkit-text-stroke:0.3px #4a463c;">test</div>
<div class="t" style="left:508.50px;top:559.19px;font-size:11px;color:#3d3a33;transform:scaleX(0.9900);-webkit-text-stroke:0.3px #4a463c;">5eeb1eebd92dbf00012a7309</div>
<div class="t" style="left:698.00px;top:559.19px;font-size:11px;color:#3d3a33;transform:scaleX(0.9550);-webkit-text-stroke:0.3px #4a463c;">DigitalInput</div>
<div class="r" style="left:30px;top:263px;width:97px;height:2px;background:#217346;"></div>
<div class="r" style="left:30px;top:263px;width:2px;height:28px;background:#217346;"></div>
<div class="r" style="left:183px;top:265px;width:247px;height:2px;background:#5b8f68;"></div>
<div class="r" style="left:184px;top:300.5px;width:246.5px;height:18.5px;background:transparent;border:1.5px solid #4f8a5e;box-sizing:border-box;"></div>
<div class="r" style="left:427.5px;top:316.5px;width:4px;height:4px;background:#4f8a5e;"></div>
<div class="r" style="left:1171px;top:568px;width:3px;height:3px;background:#3b3b3b;"></div>
<div class="r" style="left:1214px;top:230px;width:225px;height:741px;background:#eeeef0;"></div>
<div class="r" style="left:1214px;top:230px;width:225px;height:28px;background:#f0f0f0;"></div>
<div class="t" style="left:1268.90px;top:237.92px;font-size:13.8px;color:#3f8f70;transform:scaleX(1.0109);">Konfigurator</div>
<svg class="r" style="left:1427.5px;top:241.2px;" width="6" height="6" viewBox="0 0 6 6"><path d="M0.5,0.5 L5.5,5.5 M5.5,0.5 L0.5,5.5" stroke="#666" stroke-width="1.1"/></svg>
<div class="t" style="left:1225.00px;top:264.03px;font-size:10px;color:#262626;font-weight:bold;transform:scaleX(0.9429);">Welches Format besitzen die Daten?</div>
<div class="r" style="left:1226px;top:282px;width:205px;height:19.5px;background:#fafafa;"></div>
<div class="t" style="left:1232.00px;top:286.53px;font-size:10px;color:#555;transform:scaleX(0.9042);">audako Exporter Format</div>
<svg class="r" style="left:1416px;top:289px;" width="8" height="5" viewBox="0 0 8 5"><path d="M0.5,0.5 L4,4 L7.5,0.5" fill="none" stroke="#555" stroke-width="1"/></svg>
<div class="r" style="left:1225.5px;top:309px;width:13.5px;height:13.5px;background:#fafafa;border:1px solid #999;box-sizing:border-box;"></div>
<div class="t" style="left:1245.00px;top:311.46px;font-size:9.5px;color:#444;transform:scaleX(0.9470);">Nur aktive Arbeitsmappe importieren</div>
<div class="r" style="left:1225.5px;top:333px;width:13.5px;height:12.5px;background:#1e7d45;"></div>
<svg class="r" style="left:1227px;top:335px;" width="11" height="9" viewBox="0 0 11 9"><path d="M1.5,4.5 L4,7 L9.5,1.5" fill="none" stroke="#fff" stroke-width="1.2"/></svg>
<div class="t" style="left:1245.00px;top:334.96px;font-size:9.5px;color:#444;transform:scaleX(0.9468);">Existierende Objekte updaten</div>
<div class="r" style="left:1313px;top:354px;width:60px;height:20px;background:#1e7d45;"></div>
<div class="t" style="left:1320.50px;top:359.03px;font-size:10px;color:#e8f2ec;transform:scaleX(0.8996);">Importieren</div>
<div class="t" style="left:1380.00px;top:359.03px;font-size:10px;color:#333;transform:scaleX(0.9097);">Abbrechen</div>
<svg class="r" style="left:1285px;top:443px;" width="10" height="16" viewBox="0 0 10 16"><path d="M1,1 V12 L3.8,9.4 L6,14.5 L7.8,13.7 L5.7,8.8 L9.3,8.8 Z" fill="#111" stroke="#fff" stroke-width="0.8"/></svg>
<div class="r" style="left:1214px;top:929px;width:225px;height:1px;background:#e0e0e2;"></div>
<div class="r" style="left:1225px;top:944px;width:14px;height:14px;border-radius:50%;background:#3f9a6a"></div>
<div class="t" style="left:1243.50px;top:945.69px;font-size:11px;color:#333;transform:scaleX(0.9940);">Verbunden</div>
<svg class="r" style="left:1410px;top:943px;" width="15" height="15" viewBox="0 0 15 15"><path d="M6,1 H1.5 V14 H6" fill="none" stroke="#555" stroke-width="1.1"/><path d="M5,7.5 H13.5 M10.5,4.5 L13.5,7.5 L10.5,10.5" fill="none" stroke="#555" stroke-width="1.1"/></svg>
<div class="r" style="left:0px;top:970px;width:1214px;height:2px;background:#fff;"></div>
<div class="r" style="left:0px;top:972px;width:1439px;height:26px;background:#e6e6e6;"></div>
<div class="r" style="left:1214px;top:970px;width:225px;height:2px;background:#e6e6e6;"></div>
<div class="r" style="left:0px;top:970px;width:98px;height:1.5px;background:#9e9e9e;"></div>
<div class="r" style="left:185px;top:970px;width:1029px;height:1.5px;background:#9e9e9e;"></div>
<div class="r" style="left:75px;top:972px;width:744px;height:26px;background:#f3f3f3;"></div>
<svg class="r" style="left:24px;top:979px;" width="8" height="11" viewBox="0 0 8 11"><path d="M7,0.5 V10.5 L1,5.5 Z" fill="#c2c2c2"/></svg>
<svg class="r" style="left:52px;top:979px;" width="8" height="11" viewBox="0 0 8 11"><path d="M1,0.5 V10.5 L7,5.5 Z" fill="#c2c2c2"/></svg>
<div class="t" style="left:80.80px;top:977.06px;font-size:11.5px;color:#555;transform:scaleX(0.9574);">Group</div>
<div class="t" style="left:172.50px;top:977.06px;font-size:11.5px;color:#555;transform:scaleX(0.9603);">Formula</div>
<div class="t" style="left:228.60px;top:977.06px;font-size:11.5px;color:#555;transform:scaleX(0.9776);">Dashboard</div>
<div class="t" style="left:298.60px;top:977.06px;font-size:11.5px;color:#555;transform:scaleX(0.9517);">DashboardTab</div>
<div class="t" style="left:386.00px;top:977.06px;font-size:11.5px;color:#555;transform:scaleX(0.9761);">DataConnection</div>
<div class="t" style="left:481.60px;top:977.06px;font-size:11.5px;color:#555;transform:scaleX(0.9715);">DataSource</div>
<div class="t" style="left:555.60px;top:977.06px;font-size:11.5px;color:#555;transform:scaleX(0.9795);">EventCondition</div>
<div class="t" style="left:647.00px;top:977.06px;font-size:11.5px;color:#555;transform:scaleX(1.0084);">EventDefinition</div>
<div class="t" style="left:739.50px;top:977.06px;font-size:11.5px;color:#555;transform:scaleX(0.9728);">EventCategory</div>
<div class="t" style="left:126.70px;top:977.06px;font-size:11.5px;color:#333;font-weight:bold;transform:scaleX(0.8839);">Signal</div>
<div class="r" style="left:126px;top:994px;width:31.5px;height:2.7px;background:#2e6b50;"></div>
<div class="r" style="left:861px;top:979px;width:2px;height:2px;background:#aaa;"></div>
<div class="r" style="left:861px;top:984px;width:2px;height:2px;background:#aaa;"></div>
<div class="r" style="left:861px;top:989px;width:2px;height:2px;background:#aaa;"></div>
<div class="r" style="left:879px;top:975px;width:15px;height:18px;background:#fff;border:1px solid #c6c6c6;box-sizing:border-box;"></div>
<svg class="r" style="left:883px;top:980px;" width="6" height="9" viewBox="0 0 6 9"><path d="M5.5,0.5 V8.5 L0.5,4.5 Z" fill="#555"/></svg>
<div class="r" style="left:893px;top:975px;width:468px;height:18px;background:#fff;border:1px solid #c6c6c6;box-sizing:border-box;"></div>
<div class="r" style="left:1361px;top:976px;width:36px;height:16px;background:#dadada;"></div>
<div class="r" style="left:1399px;top:975px;width:18px;height:18px;background:#fff;border:1px solid #d0d0d0;box-sizing:border-box;"></div>
<svg class="r" style="left:1405px;top:980px;" width="6" height="9" viewBox="0 0 6 9"><path d="M0.5,0.5 V8.5 L5.5,4.5 Z" fill="#555"/></svg>
<div class="r" style="left:0px;top:998px;width:1439px;height:1px;background:#d4d4d4;"></div>
<div class="r" style="left:0px;top:999px;width:1439px;height:25px;background:#f3f3f3;"></div>
<div class="t" style="left:6.00px;top:1006.46px;font-size:12.8px;color:#333;transform:scaleX(0.9271);">Bereit</div>
<svg class="r" style="left:945px;top:1003px;" width="20" height="21" viewBox="0 0 20 21"><rect x="0" y="0" width="18" height="12.5" rx="1.5" fill="#4a4a4a"/><circle cx="12.5" cy="13.7" r="6.3" fill="#f3f3f3"/><rect x="3.5" y="16.2" width="4.5" height="1.4" fill="#4a4a4a"/><rect x="11.1" y="7.699999999999999" width="2.8" height="3" transform="rotate(30 12.5 13.7)" fill="#4a4a4a"/><rect x="11.1" y="7.699999999999999" width="2.8" height="3" transform="rotate(90 12.5 13.7)" fill="#4a4a4a"/><rect x="11.1" y="7.699999999999999" width="2.8" height="3" transform="rotate(150 12.5 13.7)" fill="#4a4a4a"/><rect x="11.1" y="7.699999999999999" width="2.8" height="3" transform="rotate(210 12.5 13.7)" fill="#4a4a4a"/><rect x="11.1" y="7.699999999999999" width="2.8" height="3" transform="rotate(270 12.5 13.7)" fill="#4a4a4a"/><rect x="11.1" y="7.699999999999999" width="2.8" height="3" transform="rotate(330 12.5 13.7)" fill="#4a4a4a"/><circle cx="12.5" cy="13.7" r="4.3" fill="#4a4a4a"/><circle cx="12.5" cy="13.7" r="1.7" fill="#f3f3f3"/></svg>
<div class="t" style="left:965.00px;top:1006.19px;font-size:13px;color:#333;transform:scaleX(0.9385);">Anzeigeeinstellungen</div>
<div class="r" style="left:1101px;top:999px;width:40px;height:25px;background:#c8c8c8;"></div>
<svg class="r" style="left:1114px;top:1004px;" width="16" height="16" viewBox="0 0 16 16"><g fill="none" stroke="#666" stroke-width="1"><rect x="0.5" y="0.5" width="15" height="15"/><path d="M5.5,0.5 V15.5 M10.5,0.5 V15.5 M0.5,5.5 H15.5 M0.5,10.5 H15.5"/></g></svg>
<svg class="r" style="left:1153px;top:1004px;" width="17" height="16" viewBox="0 0 17 16"><g fill="none" stroke="#666" stroke-width="1"><rect x="0.5" y="0.5" width="15" height="14"/><rect x="4.5" y="2.5" width="8" height="10" fill="#fff"/><path d="M6,5.5 H11 M6,7.5 H11 M6,9.5 H11"/></g><path d="M3.5,3 V13.5 H12" fill="none" stroke="#bbb" stroke-width="1"/></svg>
<svg class="r" style="left:1193px;top:1004px;" width="17" height="16" viewBox="0 0 17 16"><g fill="none" stroke="#666" stroke-width="1"><rect x="0.5" y="0.5" width="15" height="15"/><path d="M9.5,0.5 V9.5 H0.5 M3.5,0.5 V9 M6.5,0.5 V9"/></g></svg>
<div class="r" style="left:1226px;top:1011px;width:10px;height:2px;background:#666;"></div>
<div class="r" style="left:1240px;top:1012px;width:119px;height:1px;background:#999;"></div>
<div class="r" style="left:1297px;top:1005px;width:6px;height:14px;background:#666;"></div>
<div class="r" style="left:1363px;top:1011.5px;width:10px;height:2px;background:#555;"></div>
<div class="r" style="left:1367px;top:1007.5px;width:2px;height:10px;background:#555;"></div>
<div class="t" style="left:1384.00px;top:1006.49px;font-size:13px;color:#333;transform:scaleX(0.8953);">100 %</div>
<div class="r" style="left:0px;top:1024px;width:1441px;height:7px;background:#fff;"></div>
<div class="r" style="left:1440px;top:0px;width:1px;height:1031px;background:#fff;"></div>
</div></body></html>
